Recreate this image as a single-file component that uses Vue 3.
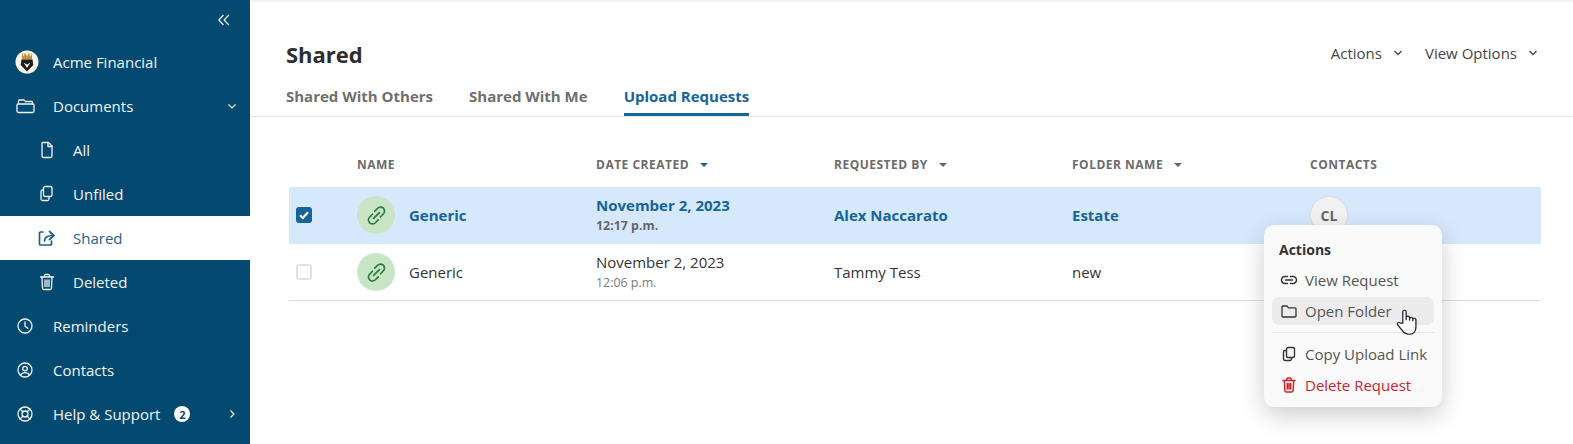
<template>
  <div class="app">
    <aside class="sidebar">
      <div class="collapse">
        <svg width="14" height="14" viewBox="0 0 14 14" fill="none" stroke="currentColor" stroke-width="1.2"><path d="M6.500 2 1.800 7l4.700 5M11.800 2 7.100 7l4.700 5" /></svg>
      </div>
      <nav>
        <a v-for="item in nav" :key="item.label" class="nav-item" :class="{ sub: item.sub, active: item.active }">
          <span class="nav-icon">
            <svg v-if="item.icon === 'logo'" width="24" height="24" viewBox="0 0 24 24">
              <circle cx="12" cy="12" r="11.500" fill="#f7f3ec" />
              <path d="M7 2.500 8.500 6.500 10.200 2.500l1.800 4 1.800-4 1.700 4L17 2.500V9.500H7z" fill="#c6923c" />
              <path d="M6.500 9.500h11l.8 5.500-6.300 6.500L5.700 15z" fill="#1d1b1a" />
              <path d="M8.500 12.500 12 18l3.500-5.500L12 14.500z" fill="#ececec" />
            </svg>
            <svg v-else width="20" height="20" viewBox="0 0 20 20" fill="none" stroke="currentColor" :stroke-width="item.icon === 'share' ? 1.7 : 1.3" stroke-linejoin="round" stroke-linecap="round">
              <path v-for="d in icons[item.icon]" :key="d" :d="d" />
            </svg>
          </span>
          <span class="nav-label">{{ item.label }}</span>
          <span v-if="item.badge" class="badge">{{ item.badge }}</span>
          <svg v-if="item.arrow === 'down'" class="arrow" width="10" height="10" viewBox="0 0 10 10" fill="none" stroke="currentColor" stroke-width="1.2"><path d="M1.500 3.500 5 7l3.500-3.500" /></svg>
          <svg v-if="item.arrow === 'right'" class="arrow" width="10" height="10" viewBox="0 0 10 10" fill="none" stroke="currentColor" stroke-width="1.2"><path d="M3.500 1.500 7 5 3.500 8.500" /></svg>
        </a>
      </nav>
    </aside>

    <main class="main">
      <header class="head">
        <div class="title-row">
          <h1>Shared</h1>
          <div class="head-actions">
            <button>Actions <svg width="10" height="10" viewBox="0 0 10 10" fill="none" stroke="currentColor" stroke-width="1.3"><path d="M1.500 3 5 6.500 8.500 3" /></svg></button>
            <button>View Options <svg width="10" height="10" viewBox="0 0 10 10" fill="none" stroke="currentColor" stroke-width="1.3"><path d="M1.500 3 5 6.500 8.500 3" /></svg></button>
          </div>
        </div>
        <div class="tabs">
          <a v-for="t in tabs" :key="t" class="tab" :class="{ current: t === 'Upload Requests' }">{{ t }}</a>
        </div>
      </header>

      <section class="table">
        <div class="row heading">
          <span></span>
          <span v-for="c in columns" :key="c.label" class="th">
            {{ c.label }}
            <i v-if="c.sort" class="caret" :class="{ on: c.on }"></i>
          </span>
        </div>
        <div v-for="r in rows" :key="r.time" class="row data" :class="{ selected: r.selected }">
          <span class="check">
            <svg v-if="r.selected" width="10" height="10" viewBox="0 0 10 10" fill="none" stroke="#fff" stroke-width="2.200"><path d="M1 5.200 3.800 8 9 2.200" /></svg>
          </span>
          <span class="name">
            <span class="link-icon">
              <svg width="23" height="23" viewBox="0 0 20 20" fill="none" stroke="#2b7d3f" stroke-width="1.500" stroke-linecap="round"><path d="M8.500 6.200 11 3.700a3.400 3.400 0 0 1 5 4.800l-2.500 2.600" /><path d="M11.500 13.800 9 16.300a3.400 3.400 0 0 1-5-4.800l2.500-2.600" /><path d="m7.500 12.500 5-5" /></svg>
            </span>
            {{ r.name }}
          </span>
          <span class="date">
            <span>{{ r.date }}</span>
            <small>{{ r.time }}</small>
          </span>
          <span>{{ r.by }}</span>
          <span>{{ r.folder }}</span>
          <span><span v-if="r.selected" class="avatar">CL</span></span>
        </div>
      </section>

      <div class="menu">
        <div class="menu-title">Actions</div>
        <a class="menu-item">
          <svg width="18" height="18" viewBox="0 0 18 18" fill="none" stroke="currentColor" stroke-width="1.500" stroke-linecap="round"><path d="M7.500 5.500H5a3.500 3.500 0 0 0 0 7h2.500M10.500 5.500H13a3.500 3.500 0 0 1 0 7h-2.500M5.500 9h7" /></svg>
          View Request
        </a>
        <a class="menu-item hover">
          <svg width="18" height="18" viewBox="0 0 18 18" fill="none" stroke="currentColor" stroke-width="1.300" stroke-linejoin="round"><path d="M2 5a1 1 0 0 1 1-1h4l1.500 1.800H15a1 1 0 0 1 1 1V14a1 1 0 0 1-1 1H3a1 1 0 0 1-1-1z" /></svg>
          Open Folder
          <svg class="hand" width="26" height="28" viewBox="0 0 20 24" preserveAspectRatio="none" fill="#fff" stroke="#1e2233" stroke-width="1" stroke-linejoin="round"><path d="M6 13V3.200a1.300 1.300 0 0 1 2.600 0V10V8.200a1.300 1.300 0 0 1 2.600 0V10.500V9a1.300 1.300 0 0 1 2.500 0v2V10a1.200 1.200 0 0 1 2.400 0v6.500c0 3.500-2 6-5.200 6-2.800 0-4-1-5.500-3.500L2 14.500c-.8-1.500 1-2.800 2.200-1.500z" /></svg>
        </a>
        <div class="menu-line"></div>
        <a class="menu-item">
          <svg width="18" height="18" viewBox="0 0 18 18" fill="none" stroke="currentColor" stroke-width="1.400" stroke-linejoin="round"><rect x="6.500" y="2.500" width="8" height="10" rx="1.800" /><path d="M6.500 5.500H5a1.500 1.500 0 0 0-1.500 1.500v7A1.500 1.500 0 0 0 5 15.500h5a1.500 1.500 0 0 0 1.500-1.500v-1.500" /></svg>
          Copy Upload Link
        </a>
        <a class="menu-item danger">
          <svg width="18" height="18" viewBox="0 0 18 18" fill="none" stroke="currentColor" stroke-width="1.500" stroke-linejoin="round" stroke-linecap="round"><path d="M3 4.500h12M6.800 4.500V3a1 1 0 0 1 1-1h2.400a1 1 0 0 1 1 1v1.500M4.300 4.500l.6 10a1.500 1.500 0 0 0 1.500 1.500h5.200a1.500 1.500 0 0 0 1.500-1.500l.6-10M7.300 7.500v5.500M9 7.500v5.500M10.700 7.500v5.500" /></svg>
          Delete Request
        </a>
      </div>
    </main>
  </div>
</template>

<script setup>
const icons = {
  folder: ['M3.500 7V5a1 1 0 0 1 1-1h4.500l1.500 1.500h6a1 1 0 0 1 1 1V8', 'M3 8h15a1 1 0 0 1 1 1v6a1.500 1.500 0 0 1-1.500 1.500h-14A1.500 1.500 0 0 1 2 15V9a1 1 0 0 1 1-1z'],
  file: ['M5 3.500a1 1 0 0 1 1-1h5.500L15 6v10a1.500 1.500 0 0 1-1.500 1.500h-7A1.500 1.500 0 0 1 5 16z', 'M11 2.500V6.500h4'],
  copy: ['M8 2.500h5.500A1.500 1.500 0 0 1 15 4v7a1.500 1.500 0 0 1-1.500 1.500H8A1.500 1.500 0 0 1 6.500 11V4A1.500 1.500 0 0 1 8 2.500z', 'M6.500 6H5.500A1.500 1.500 0 0 0 4 7.500V15a1.500 1.500 0 0 0 1.500 1.500h5A1.500 1.500 0 0 0 12 15v-2.500'],
  share: ['M6 4H3.500A1 1 0 0 0 2.500 5v11a1 1 0 0 0 1 1h10a1 1 0 0 0 1-1v-3', 'M7.500 13c0-3.500 2.500-5.500 9-5.500', 'M12.500 3.500l4.500 4-4.500 4'],
  trash: ['M3.500 5h13M7.500 5V3.500a1 1 0 0 1 1-1h3a1 1 0 0 1 1 1V5', 'M5 5l.5 11a1.500 1.500 0 0 0 1.500 1.500h6a1.500 1.500 0 0 0 1.500-1.500L15 5', 'M8 8v6.500M10 8v6.500M12 8v6.500'],
  clock: ['M10 3a7 7 0 1 0 0 14 7 7 0 0 0 0-14z', 'M10 6v4.300l2.800 2'],
  user: ['M10 3a7 7 0 1 0 0 14 7 7 0 0 0 0-14z', 'M10 6.300a2.300 2.300 0 1 0 0 4.600 2.300 2.300 0 0 0 0-4.600z', 'M5.800 15c.8-1.700 2.300-2.300 4.200-2.300s3.400.6 4.200 2.300'],
  help: ['M10 3a7 7 0 1 0 0 14 7 7 0 0 0 0-14z', 'M10 7a3 3 0 1 0 0 6 3 3 0 0 0 0-6z', 'M5 5l3 3M15 5l-3 3M5 15l3-3M15 15l-3-3'],
}

const nav = [
  { label: 'Acme Financial', icon: 'logo' },
  { label: 'Documents', icon: 'folder', arrow: 'down' },
  { label: 'All', icon: 'file', sub: true },
  { label: 'Unfiled', icon: 'copy', sub: true },
  { label: 'Shared', icon: 'share', sub: true, active: true },
  { label: 'Deleted', icon: 'trash', sub: true },
  { label: 'Reminders', icon: 'clock' },
  { label: 'Contacts', icon: 'user' },
  { label: 'Help & Support', icon: 'help', badge: 2, arrow: 'right' },
]

const tabs = ['Shared With Others', 'Shared With Me', 'Upload Requests']

const columns = [
  { label: 'Name' },
  { label: 'Date Created', sort: true, on: true },
  { label: 'Requested By', sort: true },
  { label: 'Folder Name', sort: true },
  { label: 'Contacts' },
]

const rows = [
  { name: 'Generic', date: 'November 2, 2023', time: '12:17 p.m.', by: 'Alex Naccarato', folder: 'Estate', selected: true },
  { name: 'Generic', date: 'November 2, 2023', time: '12:06 p.m.', by: 'Tammy Tess', folder: 'new' },
]
</script>

<style>
html, body {
  margin: 0;
  background: #fff;
}
</style>

<style scoped>
.app {
  display: flex;
  height: 444px;
  overflow: hidden;
  font-family: "Open Sans", sans-serif;
  font-size: 15px;
  color: #333;
}
.sidebar {
  width: 250px;
  flex: none;
  background: #044a70;
  color: #f1f5f8;
}
.collapse {
  height: 40px;
  display: flex;
  justify-content: flex-end;
  align-items: center;
  padding-right: 19px;
  box-sizing: border-box;
}
.nav-item {
  height: 44px;
  display: flex;
  align-items: center;
  padding-left: 15px;
  position: relative;
}
.nav-item.sub {
  padding-left: 37px;
}
.nav-icon {
  width: 38px;
  display: flex;
  align-items: center;
}
.nav-item.sub .nav-icon {
  width: 36px;
}
.nav-item.active {
  background: #fff;
  color: #1f5f85;
}
.badge {
  width: 16px;
  height: 16px;
  margin-left: 14px;
  border-radius: 50%;
  background: #fff;
  color: #044a70;
  font-size: 11px;
  font-weight: 700;
  display: flex;
  align-items: center;
  justify-content: center;
}
.arrow {
  position: absolute;
  right: 13px;
}
.main {
  flex: 1;
  position: relative;
  min-width: 0;
}
.head {
  border-bottom: 1px solid #e6e6e6;
  padding: 0 35px 0 36px;
  height: 117px;
  box-sizing: border-box;
  box-shadow: inset 0 4px 4px -4px rgba(0, 0, 0, 0.12);
}
.title-row {
  display: flex;
  justify-content: space-between;
  align-items: flex-start;
  padding-top: 38px;
  height: 80px;
  box-sizing: border-box;
}
h1 {
  margin: 0;
  font-size: 22px;
  line-height: 32px;
  font-weight: 700;
  color: #2e2e2e;
}
.head-actions {
  display: flex;
  gap: 22px;
  margin-top: -1px;
}
.head-actions button {
  border: 0;
  background: none;
  padding: 0;
  font: inherit;
  font-size: 15px;
  line-height: 32px;
  color: #444;
  display: flex;
  align-items: center;
  gap: 11px;
}
.tabs {
  display: flex;
  gap: 36px;
}
.tab {
  height: 36px;
  line-height: 32px;
  box-sizing: border-box;
  font-weight: 700;
  font-size: 15px;
  color: #6f6f6f;
}
.tab.current {
  color: #15649a;
  border-bottom: 3px solid #15649a;
}
.table {
  margin: 25px 32px 0 39px;
}
.row {
  display: grid;
  grid-template-columns: 68px 239px 238px 238px 238px 1fr;
  align-items: center;
}
.heading {
  height: 45px;
}
.th {
  font-size: 12px;
  font-weight: 700;
  color: #6b6b6b;
  letter-spacing: 0.5px;
  text-transform: uppercase;
  display: flex;
  align-items: center;
  gap: 11px;
}
.caret {
  width: 0;
  height: 0;
  border: 4px solid transparent;
  border-top: 4px solid #666;
  border-bottom: 0;
}
.caret.on {
  border-top-color: #15649a;
}
.data {
  height: 57px;
  padding-bottom: 1px;
  box-sizing: border-box;
  color: #333;
}
.data:last-child {
  border-bottom: 1px solid #dedede;
  padding-bottom: 0;
}
.selected {
  background: #d6e8fc;
  color: #15649a;
  font-weight: 700;
}
.check {
  width: 16px;
  height: 16px;
  margin-left: 7px;
  box-sizing: border-box;
  border: 2px solid #e2e2e2;
  border-radius: 3px;
  background: #fff;
  display: flex;
  align-items: center;
  justify-content: center;
}
.selected .check {
  background: #15649a;
  border-color: #15649a;
}
.name {
  display: flex;
  align-items: center;
  gap: 14px;
}
.link-icon {
  width: 38px;
  height: 38px;
  border-radius: 50%;
  background: #c8e5c5;
  display: flex;
  align-items: center;
  justify-content: center;
}
.date {
  display: flex;
  flex-direction: column;
  line-height: 21px;
}
.date small {
  font-size: 12.400px;
  line-height: 20px;
  color: #7a7a7a;
}
.selected .date small {
  color: #666;
}
.avatar {
  width: 38px;
  height: 38px;
  box-sizing: border-box;
  border-radius: 50%;
  background: #f2f2f2;
  border: 1px solid #ddd;
  color: #666;
  font-size: 14px;
  font-weight: 700;
  display: flex;
  align-items: center;
  justify-content: center;
}
.menu {
  position: absolute;
  left: 1014px;
  top: 225px;
  width: 178px;
  height: 182px;
  box-sizing: border-box;
  padding: 13px 8px 0;
  background: #fafafa;
  border-radius: 10px;
  box-shadow: 0 8px 24px rgba(0, 0, 0, 0.2);
  font-size: 15px;
  color: #555;
}
.menu-title {
  font-weight: 700;
  color: #333;
  font-size: 14px;
  padding-left: 7px;
  line-height: 24px;
  margin-bottom: 4px;
}
.menu-item {
  height: 28px;
  margin-bottom: 3px;
  border-radius: 7px;
  display: flex;
  align-items: center;
  gap: 7px;
  padding-left: 8px;
  position: relative;
}
.menu-item svg:first-child {
  color: #333;
}
.menu-item.hover {
  background: #ececec;
}
.menu-item.danger,
.menu-item.danger svg:first-child {
  color: #cf222e;
}
.menu-line {
  height: 1px;
  background: #e4e4e4;
  margin: 7px 0 7px;
}
.hand {
  position: absolute;
  left: 123px;
  top: 11px;
}
</style>
